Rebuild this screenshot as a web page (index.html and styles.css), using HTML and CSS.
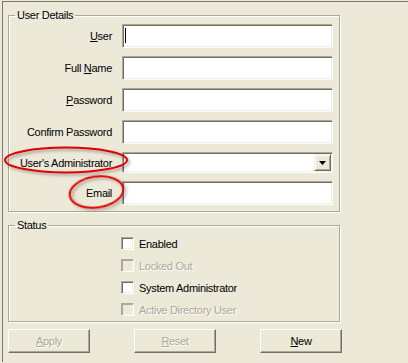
FILE: index.html
```html
<!DOCTYPE html>
<html lang="en">
<head>
    <meta charset="UTF-8">
    <meta name="viewport" content="width=device-width, initial-scale=1.0">
    <title>User Details</title>
    <link rel="stylesheet" href="styles.css">
</head>
<body>
    <div class="window">
        <fieldset class="group">
            <legend>User Details</legend>
            <div class="form-grid">
                <label class="lbl" for="user"><u>U</u>ser</label>
                <div class="field-wrap">
                    <input class="field" id="user" type="text">
                    <span class="caret"></span>
                </div>
                <label class="lbl" for="full_name">Full <u>N</u>ame</label>
                <input class="field" id="full_name" type="text">
                <label class="lbl" for="password"><u>P</u>assword</label>
                <input class="field" id="password" type="password">
                <label class="lbl" for="confirm">Confirm Password</label>
                <input class="field" id="confirm" type="password">
                <label class="lbl">User's Administrator</label>
                <div class="combo">
                    <span class="combo-btn">
                        <svg width="7" height="4" viewBox="0 0 7 4"><path d="M0 0h7L3.5 4z" fill="#000"/></svg>
                    </span>
                </div>
                <label class="lbl" for="email">Email</label>
                <input class="field" id="email" type="text">
            </div>
        </fieldset>
        <fieldset class="group status">
            <legend>Status</legend>
            <div class="checks">
                <label class="check"><input type="checkbox">Enabled</label>
                <label class="check disabled"><input type="checkbox" disabled>Locked Out</label>
                <label class="check"><input type="checkbox">System Administrator</label>
                <label class="check disabled"><input type="checkbox" disabled>Active Directory User</label>
            </div>
        </fieldset>
        <div class="actions">
            <button class="btn" disabled><u>A</u>pply</button>
            <button class="btn" disabled><u>R</u>eset</button>
            <button class="btn"><u>N</u>ew</button>
        </div>
    </div>
    <svg class="marks" width="408" height="363" viewBox="0 0 408 363">
        <defs>
            <filter id="shade" x="-20%" y="-40%" width="140%" height="180%">
                <feDropShadow dx="2" dy="2" stdDeviation="1.5" flood-color="#000" flood-opacity="0.35"/>
            </filter>
        </defs>
        <ellipse cx="66" cy="160" rx="61" ry="12.5" fill="none" stroke="#e00000" stroke-width="2" filter="url(#shade)"/>
        <ellipse cx="96.5" cy="192" rx="27" ry="15.5" fill="none" stroke="#e00000" stroke-width="2" filter="url(#shade)" transform="rotate(-8 96.5 192)"/>
    </svg>
</body>
</html>
```

FILE: styles.css
```css
body {
    margin: 0;
    background: #ece9d8;
    font-family: "Liberation Sans", Arial, sans-serif;
    font-size: 11px;
    letter-spacing: -0.3px;
    color: #000;
}
.window {
    margin: 1px 0 0 2px;
    height: 361px;
    box-sizing: border-box;
    border-top: 1px solid #7b7a6e;
    border-left: 1px solid #7b7a6e;
    padding: 7px 0 0 5px;
}
.group {
    width: 332px;
    box-sizing: border-box;
    margin: 0;
    padding: 0;
    border: 1px solid #aca899;
    box-shadow: 1px 1px 0 #fff, inset 1px 1px 0 #fff;
}
.group legend {
    margin-left: 6px;
    padding: 0 2px;
    line-height: 13px;
}
.status {
    margin-top: 7px;
}
.form-grid {
    display: grid;
    grid-template-columns: 104px 211px;
    column-gap: 9px;
    row-gap: 8px;
    align-items: center;
    padding: 2px 6px 6px 0;
}
.lbl {
    text-align: right;
    padding-right: 1px;
}
.field-wrap {
    position: relative;
    height: 24px;
}
.field {
    display: block;
    width: 211px;
    height: 24px;
    box-sizing: border-box;
    margin: 0;
    padding: 0 3px;
    background: #fff;
    border: 1px solid;
    border-color: #aca899 #fff #fff #aca899;
    box-shadow: inset 1px 1px 0 #716f64, inset -1px -1px 0 #f1efe2;
    font: inherit;
    outline: none;
}
.caret {
    position: absolute;
    left: 3px;
    top: 4px;
    width: 1px;
    height: 15px;
    background: #000;
}
.combo {
    display: flex;
    justify-content: flex-end;
    width: 211px;
    height: 21px;
    box-sizing: border-box;
    padding: 1px 1px 1px 2px;
    background: #fff;
    border: 1px solid;
    border-color: #aca899 #fff #fff #aca899;
    box-shadow: inset 1px 1px 0 #716f64, inset -1px -1px 0 #f1efe2;
}
.combo-btn {
    display: flex;
    align-items: center;
    justify-content: center;
    width: 17px;
    box-sizing: border-box;
    background: #ece9d8;
    border: 1px solid;
    border-color: #f1efe2 #716f64 #716f64 #f1efe2;
    box-shadow: inset 1px 1px 0 #fff, inset -1px -1px 0 #aca899;
    padding-top: 1px;
}
.checks {
    display: flex;
    flex-direction: column;
    gap: 9px;
    padding: 5px 0 5px 112px;
}
.check {
    display: flex;
    align-items: center;
    gap: 5px;
    height: 13px;
}
.check input {
    appearance: none;
    margin: 0;
    width: 13px;
    height: 13px;
    background: #fff;
    border: 1px solid;
    border-color: #aca899 #fff #fff #aca899;
    box-shadow: inset 1px 1px 0 #716f64, inset -1px -1px 0 #f1efe2;
}
.check.disabled {
    color: #aca899;
    text-shadow: 1px 1px 0 #fff;
}
.check.disabled input {
    background: #ece9d8;
    box-shadow: inset 1px 1px 0 #aca899, inset -1px -1px 0 #f1efe2;
}
.actions {
    display: flex;
    gap: 44px;
    margin-top: 7px;
}
.btn {
    width: 82px;
    height: 24px;
    margin: 0;
    padding: 0;
    background: #ece9d8;
    border: 1px solid;
    border-color: #fff #716f64 #716f64 #fff;
    box-shadow: inset -1px -1px 0 #aca899;
    font: inherit;
    letter-spacing: inherit;
    color: #000;
}
.btn:disabled {
    color: #aca899;
    text-shadow: 1px 1px 0 #fff;
}
.marks {
    position: absolute;
    left: 0;
    top: 0;
    pointer-events: none;
}
```
